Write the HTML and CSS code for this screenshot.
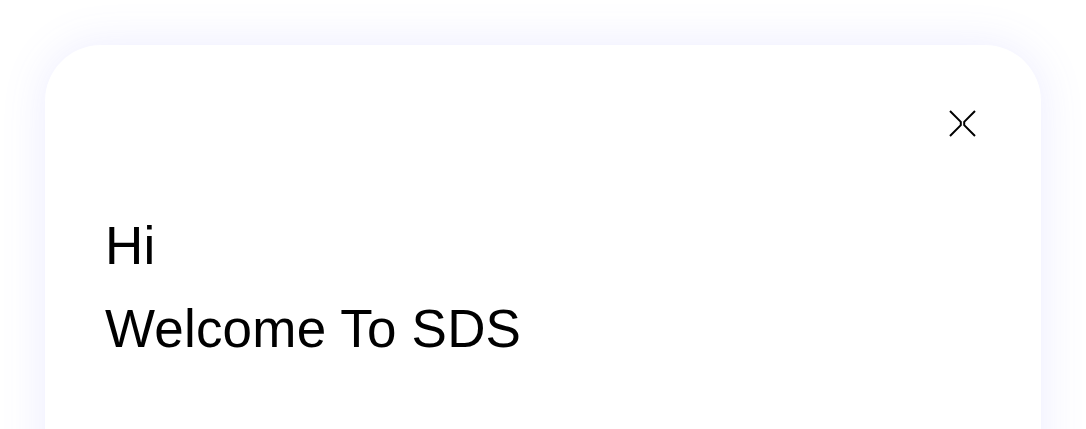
FILE: index.html
```html
<!DOCTYPE html>
<html>
<head>
<meta charset="utf-8">
<link rel="stylesheet" href="styles.css">
</head>
<body>
<div class="page">
  <div class="card">
    <div class="card-head">
      <button class="close" aria-label="Close">
        <svg width="28" height="28" viewBox="0 0 28 28" fill="none" stroke="#000" stroke-width="2" stroke-linecap="butt" stroke-linejoin="miter">
          <polyline points="2,1 12.8,11.8 12.8,15.2 2,26"/>
          <polyline points="27,1 16.2,11.8 16.2,15.2 27,26"/>
        </svg>
      </button>
    </div>
    <h1 class="greet">Hi</h1>
    <h2 class="welcome">Welcome To SDS</h2>
  </div>
</div>
</body>
</html>
```
FILE: styles.css
```css
html, body {
  margin: 0;
  padding: 0;
  background: #ffffff;
  overflow: hidden;
}
.page {
  padding: 45px 45px 0 45px;
  height: 429px;
  box-sizing: border-box;
}
.card {
  background: #ffffff;
  border-radius: 56px;
  box-shadow: 0 0 45px rgba(110, 110, 255, 0.13);
  height: 600px;
  padding: 65px 65px 0 60px;
  box-sizing: border-box;
  font-family: "Liberation Sans", Arial, sans-serif;
  color: #000;
}
.card-head {
  display: flex;
  justify-content: flex-end;
  height: 28px;
}
.close {
  border: 0;
  background: none;
  padding: 0;
  width: 28px;
  height: 28px;
  display: block;
  cursor: pointer;
}
.close svg { display: block; }
.greet, .welcome {
  margin: 0;
  font-weight: 400;
  font-size: 53px;
  line-height: 62px;
  letter-spacing: 0.2px;
}
.greet { margin-top: 77px; }
.welcome { margin-top: 21px; }
```
